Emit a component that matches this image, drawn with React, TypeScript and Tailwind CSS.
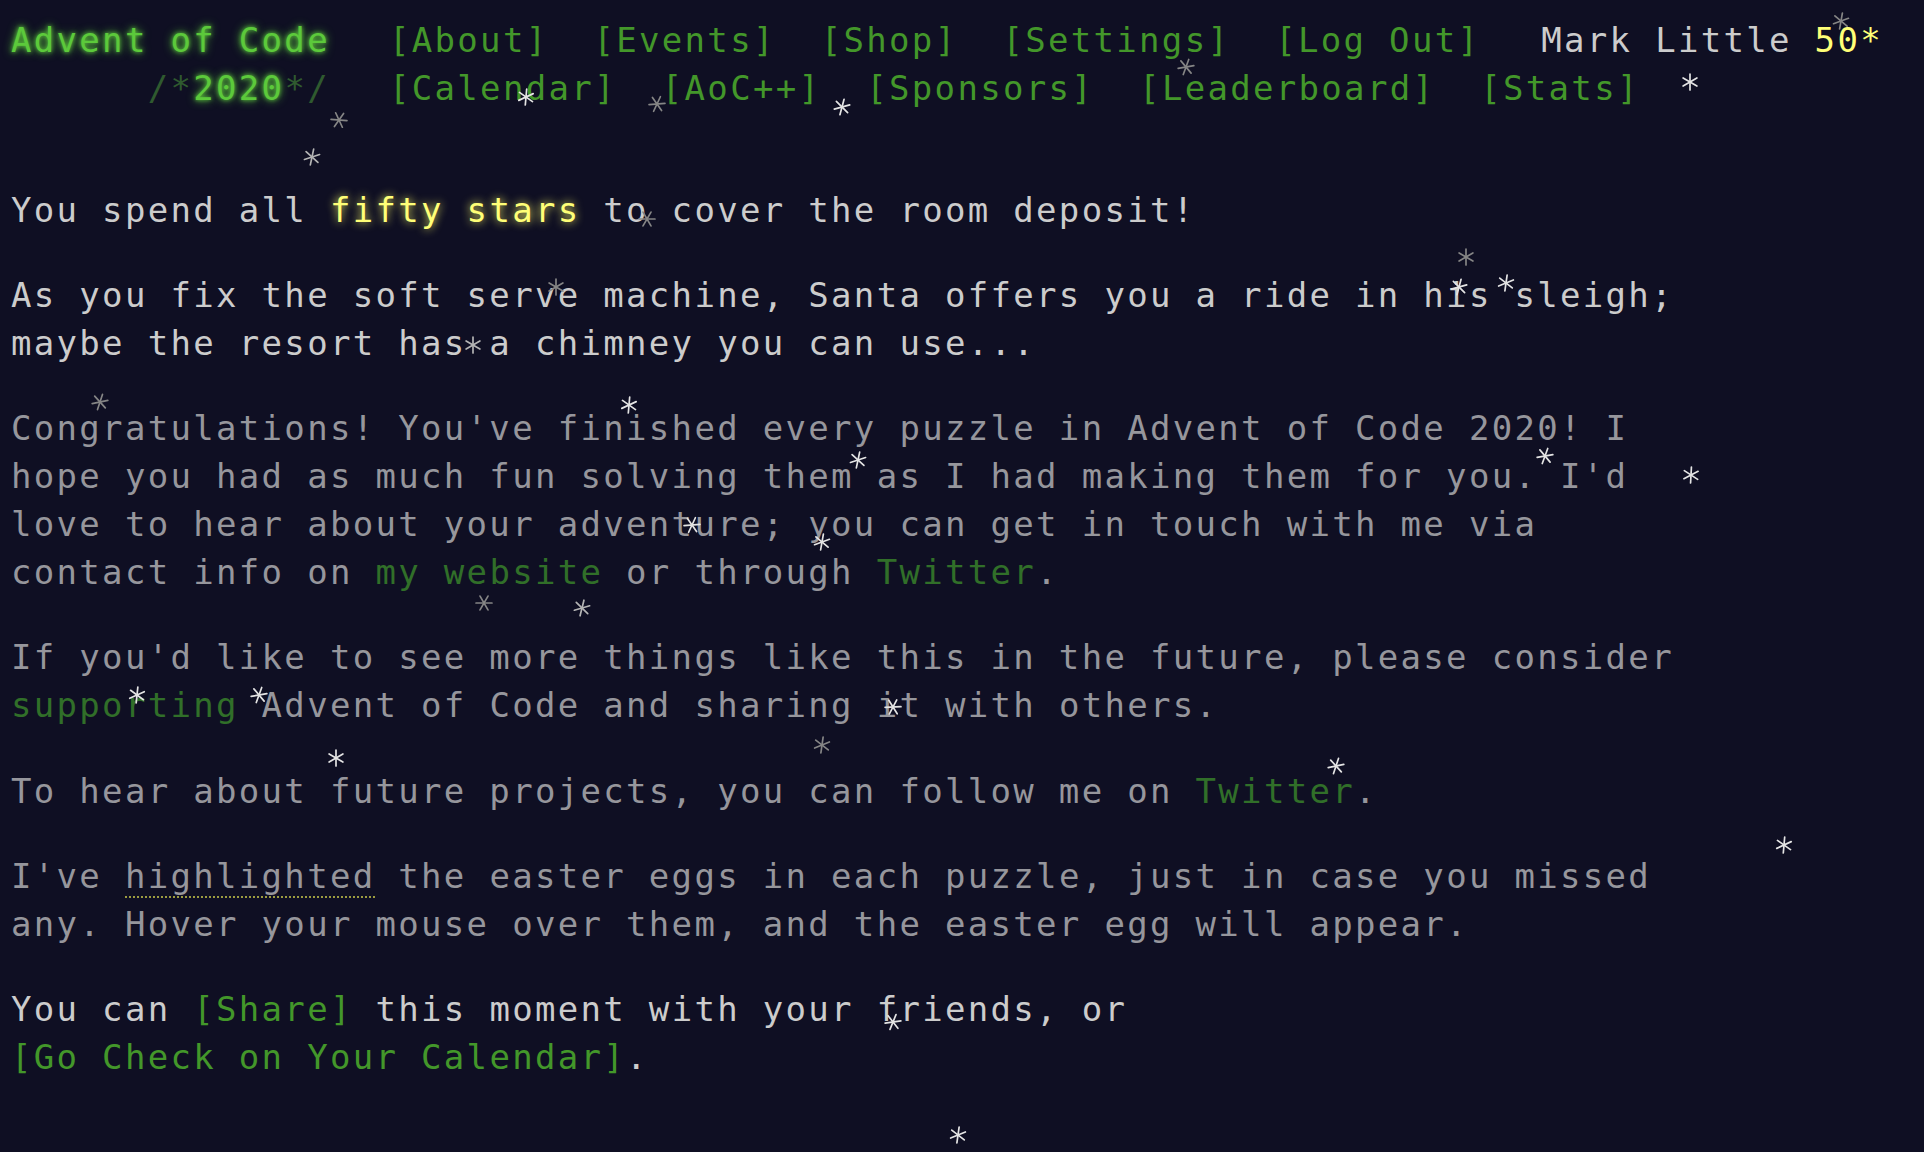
import React from "react";

type S = { x: number; y: number; c: string; r: number };

const W = "#e4e4e4";
const G = "#858585";
const M = "#b4b4b4";

const stars: S[] = [
  { x: 1841, y: 21, c: G, r: 10 },
  { x: 1186, y: 67, c: G, r: 20 },
  { x: 526, y: 97, c: W, r: 5 },
  { x: 657, y: 104, c: G, r: 25 },
  { x: 842, y: 107, c: W, r: 15 },
  { x: 1690, y: 82, c: W, r: 0 },
  { x: 339, y: 120, c: G, r: 35 },
  { x: 312, y: 157, c: M, r: 12 },
  { x: 647, y: 219, c: G, r: 30 },
  { x: 556, y: 287, c: G, r: 0 },
  { x: 1466, y: 257, c: G, r: 0 },
  { x: 1459, y: 287, c: W, r: 15 },
  { x: 1506, y: 283, c: W, r: 8 },
  { x: 473, y: 345, c: M, r: 0 },
  { x: 100, y: 402, c: G, r: 18 },
  { x: 629, y: 405, c: W, r: 5 },
  { x: 858, y: 460, c: W, r: 12 },
  { x: 1545, y: 456, c: W, r: 20 },
  { x: 1691, y: 475, c: W, r: 3 },
  { x: 692, y: 525, c: W, r: 25 },
  { x: 822, y: 542, c: W, r: 10 },
  { x: 484, y: 603, c: G, r: 30 },
  { x: 582, y: 608, c: M, r: 14 },
  { x: 137, y: 695, c: W, r: 6 },
  { x: 259, y: 695, c: W, r: 20 },
  { x: 893, y: 707, c: W, r: 28 },
  { x: 822, y: 745, c: G, r: 8 },
  { x: 336, y: 758, c: W, r: 0 },
  { x: 1336, y: 766, c: W, r: 18 },
  { x: 1784, y: 845, c: W, r: 5 },
  { x: 893, y: 1022, c: W, r: 22 },
  { x: 958, y: 1135, c: W, r: 8 },
];

function Star({ x, y, c, r }: S) {
  return (
    <svg
      className="absolute pointer-events-none"
      width="20"
      height="20"
      viewBox="0 0 20 20"
      style={{ left: x - 10, top: y - 10, transform: `rotate(${r}deg)` }}
    >
      <g stroke={c} strokeWidth="1.7" strokeLinecap="round">
        <line x1="10" y1="2" x2="10" y2="18" />
        <line x1="3.1" y1="6" x2="16.9" y2="14" />
        <line x1="3.1" y1="14" x2="16.9" y2="6" />
      </g>
    </svg>
  );
}

function NavLink({ children }: { children: React.ReactNode }) {
  return <span className="text-[#43972a]">[{children}]</span>;
}

function QLink({ children }: { children: React.ReactNode }) {
  return <span className="text-[#316f29]">{children}</span>;
}

export default function App() {
  return (
    <div className="relative w-full min-h-screen overflow-hidden bg-[#0f0f23] text-[#cccccc] font-['DejaVu_Sans_Mono',monospace] text-[34px] tracking-[2.31px] leading-[48px] pl-[11px] pt-[15.5px] whitespace-pre">
      <header className="flex flex-col">
        <div className="flex h-[48px]">
          <div className="w-[378px] shrink-0 text-[#5cc93b] [text-shadow:0_0_4px_#5cc93b,0_0_10px_#5cc93b]">
            Advent of Code
          </div>
          <nav className="flex gap-[45px]">
            <NavLink>About</NavLink>
            <NavLink>Events</NavLink>
            <NavLink>Shop</NavLink>
            <NavLink>Settings</NavLink>
            <NavLink>Log Out</NavLink>
          </nav>
          <div className="ml-[61px]">
            Mark Little <span className="text-[#ffff77]">50*</span>
          </div>
        </div>
        <div className="flex h-[48px]">
          <div className="w-[378px] shrink-0">
            {"      "}
            <span className="text-[#2f5a2f]">/*</span>
            <span className="text-[#5cc93b] [text-shadow:0_0_4px_#5cc93b,0_0_10px_#5cc93b]">2020</span>
            <span className="text-[#2f5a2f]">*/</span>
          </div>
          <nav className="flex gap-[45px]">
            <NavLink>Calendar</NavLink>
            <NavLink>AoC++</NavLink>
            <NavLink>Sponsors</NavLink>
            <NavLink>Leaderboard</NavLink>
            <NavLink>Stats</NavLink>
          </nav>
        </div>
      </header>

      <main className="mt-[74px] flex flex-col gap-[37.33px]">
        <p>
          You spend all{" "}
          <span className="text-[#ffff77] [text-shadow:0_0_10px_#ffff66]">fifty stars</span> to cover the room deposit!
        </p>
        <p>
          {"As you fix the soft serve machine, Santa offers you a ride in his sleigh;"}
          <br />
          {"maybe the resort has a chimney you can use..."}
        </p>
        <p className="text-[#96969c]">
          {"Congratulations! You've finished every puzzle in Advent of Code 2020! I"}
          <br />
          {"hope you had as much fun solving them as I had making them for you. I'd"}
          <br />
          {"love to hear about your adventure; you can get in touch with me via"}
          <br />
          {"contact info on "}
          <QLink>my website</QLink>
          {" or through "}
          <QLink>Twitter</QLink>.
        </p>
        <p className="text-[#96969c]">
          {"If you'd like to see more things like this in the future, please consider"}
          <br />
          <QLink>supporting</QLink>
          {" Advent of Code and sharing it with others."}
        </p>
        <p className="text-[#96969c]">
          {"To hear about future projects, you can follow me on "}
          <QLink>Twitter</QLink>.
        </p>
        <p className="text-[#96969c]">
          {"I've "}
          <span className="border-b-2 border-dotted border-[#9c9c40]">highlighted</span>
          {" the easter eggs in each puzzle, just in case you missed"}
          <br />
          {"any. Hover your mouse over them, and the easter egg will appear."}
        </p>
        <p>
          {"You can "}
          <NavLink>Share</NavLink>
          {" this moment with your friends, or"}
          <br />
          <NavLink>Go Check on Your Calendar</NavLink>.
        </p>
      </main>

      {stars.map((s, i) => (
        <Star key={i} {...s} />
      ))}
    </div>
  );
}
